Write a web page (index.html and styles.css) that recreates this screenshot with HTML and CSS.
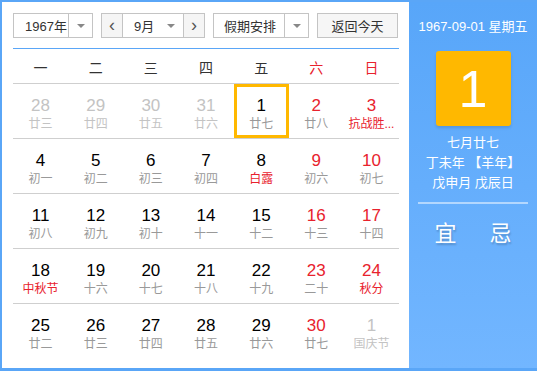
FILE: index.html
```html
<!DOCTYPE html>
<html lang="zh-CN">
<head>
  <meta charset="UTF-8">
  <title>万年历</title>
  <link rel="stylesheet" href="styles.css">
</head>
<body>

  <div class="calendar">
    <div class="main">
      <div class="toolbar">
        <div class="select year">
          <span class="select-text">1967年</span>
          <span class="select-arrow"></span>
        </div>
        <div class="month-group">
          <span class="nav-btn">&lsaquo;</span>
          <div class="select month">
            <span class="select-text">9月</span>
            <span class="select-arrow"></span>
          </div>
          <span class="nav-btn">&rsaquo;</span>
        </div>
        <div class="select holiday">
          <span class="select-text">假期安排</span>
          <span class="select-arrow"></span>
        </div>
        <button class="today-btn">返回今天</button>
      </div>

      <div class="week-head">
        <span>一</span><span>二</span><span>三</span><span>四</span><span>五</span>
        <span class="weekend">六</span><span class="weekend">日</span>
      </div>

      <div class="days" id="days"></div>
    </div>

    <div class="side">
      <div class="side-date">1967-09-01 星期五</div>
      <div class="big-day">1</div>
      <div class="lunar-info">
        <p>七月廿七</p>
        <p>丁未年 【羊年】</p>
        <p>戊申月 戊辰日</p>
      </div>
      <div class="yi-ji">
        <span>宜</span>
        <span>忌</span>
      </div>
    </div>
  </div>

<script>
  // day, lunar text, flags: o = other month, w = weekend, h = holiday (red lunar), s = selected
  const days = [
    ['28', '廿三', 'o'], ['29', '廿四', 'o'], ['30', '廿五', 'o'], ['31', '廿六', 'o'],
    ['1', '廿七', 's'], ['2', '廿八', 'w'], ['3', '抗战胜...', 'wh'],
    ['4', '初一', ''], ['5', '初二', ''], ['6', '初三', ''], ['7', '初四', ''],
    ['8', '白露', 'h'], ['9', '初六', 'w'], ['10', '初七', 'w'],
    ['11', '初八', ''], ['12', '初九', ''], ['13', '初十', ''], ['14', '十一', ''],
    ['15', '十二', ''], ['16', '十三', 'w'], ['17', '十四', 'w'],
    ['18', '中秋节', 'h'], ['19', '十六', ''], ['20', '十七', ''], ['21', '十八', ''],
    ['22', '十九', ''], ['23', '二十', 'w'], ['24', '秋分', 'wh'],
    ['25', '廿二', ''], ['26', '廿三', ''], ['27', '廿四', ''], ['28', '廿五', ''],
    ['29', '廿六', ''], ['30', '廿七', 'w'], ['1', '国庆节', 'o']
  ];

  let html = '';
  days.forEach(function (d)
  {
    let cls = 'day';
    if (d[2].includes('o')) cls += ' other';
    if (d[2].includes('w')) cls += ' weekend';
    if (d[2].includes('h')) cls += ' holiday';
    if (d[2].includes('s')) cls += ' selected';
    html += `<div class="${cls}"><span class="num">${d[0]}</span><span class="lunar">${d[1]}</span></div>`;
  });
  document.getElementById('days').innerHTML = html;
</script>

</body>
</html>
```

FILE: styles.css
```css
*
    {
    margin: 0;
    padding: 0;
    box-sizing: border-box;
    }

:root
    {
    --blu: #5aa6f7;
    --red: #e8222d;
    --gry: #999999;
    --lgt: #c3c3c3;
    --line: #cfcfcf;
    --org: #ffb800;
    }

body
    {
    width: 537px;
    height: 371px;
    font-family: "Liberation Sans", "Noto Sans CJK SC", sans-serif;
    color: #000;
    overflow: hidden;
    }

.calendar
    {
    display: flex;
    width: 537px;
    height: 371px;
    border: 2px solid var(--blu);
    border-bottom-width: 3px;
    border-right: none;
    background: #fff;
    }

.main
    {
    width: 407px;
    padding: 11px 10px 0 11px;
    }

.toolbar
    {
    display: flex;
    height: 25px;
    gap: 8px;
    }

.select
    {
    display: flex;
    height: 25px;
    border: 1px solid #c4c4c4;
    background: #fff;
    font-size: 13px;
    color: #333;
    }

.select-text
    {
    display: flex;
    align-items: center;
    padding-left: 11px;
    border-right: 1px solid #c4c4c4;
    }

.select-arrow
    {
    display: flex;
    align-items: center;
    justify-content: center;
    width: 23px;
    }

.select-arrow::after
    {
    content: "";
    border-left: 4px solid transparent;
    border-right: 4px solid transparent;
    border-top: 4px solid #888;
    }

.year .select-text
    {
    width: 55px;
    }

.month-group
    {
    display: flex;
    }

.month
    {
    border-left: none;
    border-right: none;
    }

.month .select-text
    {
    width: 36px;
    border-right: none;
    }

.month .select-arrow
    {
    width: 24px;
    }

.nav-btn
    {
    display: flex;
    align-items: center;
    justify-content: center;
    width: 22px;
    height: 25px;
    border: 1px solid #c4c4c4;
    background: #f5f5f5;
    font-size: 18px;
    color: #555;
    line-height: 1;
    padding-bottom: 2px;
    }

.holiday .select-text
    {
    width: 71px;
    padding-left: 10px;
    }

.today-btn
    {
    width: 81px;
    height: 25px;
    border: 1px solid #c4c4c4;
    background: #f6f6f6;
    font-family: inherit;
    font-size: 13px;
    color: #333;
    }

.week-head
    {
    display: grid;
    grid-template-columns: repeat(7, 1fr);
    height: 36px;
    margin-top: 10px;
    border-top: 1px solid var(--blu);
    border-bottom: 1px solid var(--line);
    font-size: 14px;
    color: #333;
    }

.week-head span
    {
    display: flex;
    align-items: center;
    justify-content: center;
    padding-top: 1px;
    }

.week-head .weekend
    {
    color: var(--red);
    }

.days
    {
    display: grid;
    grid-template-columns: repeat(7, 1fr);
    grid-auto-rows: 55px;
    }

.day
    {
    display: flex;
    flex-direction: column;
    align-items: center;
    padding-top: 12px;
    border-bottom: 1px solid var(--line);
    }

.day:nth-last-child(-n+7)
    {
    border-bottom: none;
    }

.num
    {
    font-size: 17px;
    line-height: 20px;
    }

.lunar
    {
    font-size: 12px;
    line-height: 17px;
    color: var(--gry);
    }

.weekend .num
    {
    color: var(--red);
    }

.holiday .lunar
    {
    color: var(--red);
    }

.other .num,
.other .lunar
    {
    color: var(--lgt);
    }

.selected
    {
    box-shadow: inset 0 0 0 3px var(--org);
    }

.side
    {
    flex: 1;
    display: flex;
    flex-direction: column;
    align-items: center;
    background: linear-gradient(#58a6f9, #72b6ff);
    color: #fff;
    padding-top: 16px;
    }

.side-date
    {
    font-size: 13px;
    line-height: 18px;
    }

.big-day
    {
    display: flex;
    align-items: center;
    justify-content: center;
    width: 75px;
    height: 75px;
    margin-top: 15px;
    background: var(--org);
    border-radius: 3px;
    font-size: 52px;
    box-shadow: 0 2px 3px rgba(0, 0, 0, 0.12);
    }

.lunar-info
    {
    margin-top: 7px;
    width: 110px;
    padding-bottom: 9px;
    border-bottom: 2px solid rgba(255, 255, 255, 0.5);
    text-align: center;
    font-size: 13px;
    line-height: 20px;
    }

.yi-ji
    {
    display: flex;
    gap: 33px;
    margin-top: 11px;
    font-size: 22px;
    text-shadow: 1px 2px 2px rgba(0, 0, 0, 0.2);
    }
```
